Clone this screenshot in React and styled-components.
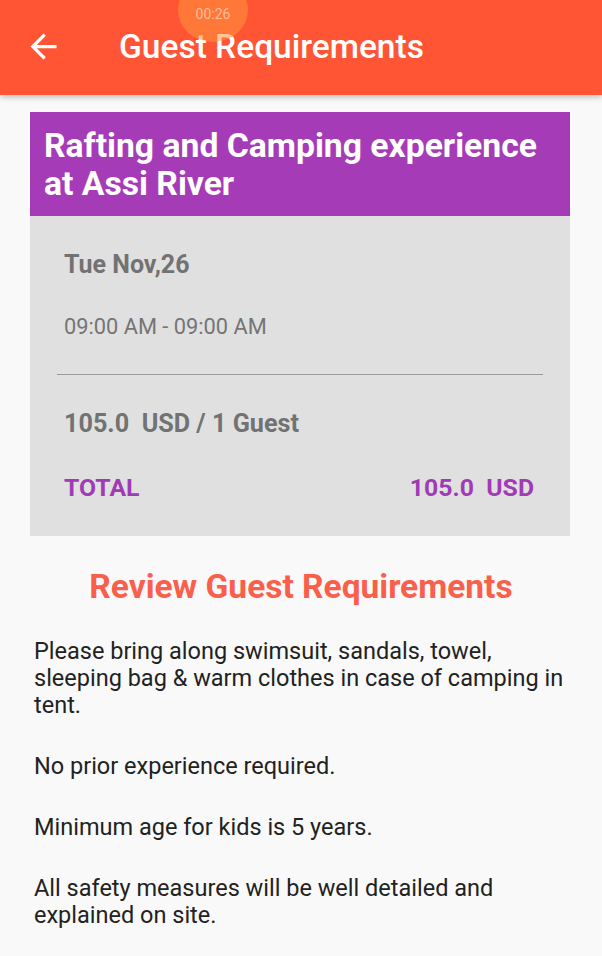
import React from "react";
import styled, { createGlobalStyle } from "styled-components";

const GlobalStyle = createGlobalStyle`
  html, body {
    margin: 0;
    padding: 0;
    background: #f9f9f9;
    font-family: Roboto, "Liberation Sans", sans-serif;
  }
`;

const Page = styled.div`
  width: 602px;
  height: 956px;
  overflow: hidden;
  position: relative;
  background: #f9f9f9;
`;

const AppBar = styled.div`
  height: 95px;
  background: #ff5534;
  display: flex;
  align-items: center;
  padding-left: 24px;
  box-shadow: 0 2px 6px rgba(0, 0, 0, 0.25);
  position: relative;
  z-index: 1;
`;

const BackButton = styled.div`
  width: 39px;
  height: 39px;
  display: flex;
  align-items: center;
  justify-content: center;
  margin-right: 56px;
  margin-top: -2px;
`;

const Title = styled.h1`
  margin: 0;
  margin-top: -2px;
  color: #fff;
  font-size: 33.5px;
  line-height: 40px;
  font-weight: 500;
`;

const RecDot = styled.div`
  position: absolute;
  left: 178px;
  top: -22px;
  width: 70px;
  height: 64px;
  border-radius: 50%;
  background: rgba(255, 150, 60, 0.55);
  color: rgba(255, 220, 200, 0.7);
  font-size: 14px;
  display: flex;
  align-items: flex-end;
  justify-content: center;
  padding-bottom: 20px;
  box-sizing: border-box;
`;

const Card = styled.div`
  margin: 17px 32px 0 30px;
`;

const CardHead = styled.div`
  background: #a63bb8;
  color: #fff;
  font-size: 33.7px;
  font-weight: 700;
  line-height: 38px;
  padding: 15px 14px 13px 14px;
`;

const CardBody = styled.div`
  background: #e0e0e0;
  padding: 34px 36px 33px 34px;
`;

const DateText = styled.div`
  color: #727272;
  font-size: 25px;
  line-height: 30px;
  font-weight: 700;
`;

const TimeText = styled.div`
  color: #757575;
  font-size: 21.8px;
  line-height: 26px;
  margin-top: 34px;
`;

const Divider = styled.div`
  height: 1px;
  background: #9a9a9a;
  margin: 34px -9px 0 -7px;
`;

const PriceText = styled.div`
  color: #727272;
  font-size: 25.2px;
  line-height: 30px;
  font-weight: 700;
  margin-top: 34px;
  white-space: pre;
`;

const TotalRow = styled.div`
  display: flex;
  justify-content: space-between;
  color: #a13ab5;
  font-size: 24.8px;
  line-height: 30px;
  font-weight: 700;
  margin-top: 34px;
  white-space: pre;
`;

const SectionTitle = styled.h2`
  margin: 31px 0 0;
  text-align: center;
  color: #fa5f4c;
  font-size: 33.5px;
  line-height: 40px;
  font-weight: 700;
`;

const Requirements = styled.div`
  padding: 31px 30px 0 34px;
  display: flex;
  flex-direction: column;
  gap: 34px;
`;

const Para = styled.p`
  margin: 0;
  color: #222;
  font-size: 23.5px;
  line-height: 27px;
`;

export default function App() {
  return (
    <Page>
      <GlobalStyle />
      <AppBar>
        <BackButton>
          <svg width="39" height="39" viewBox="0 0 24 24">
            <path
              d="M20 11H7.83l5.59-5.59L12 4l-8 8 8 8 1.41-1.41L7.83 13H20v-2z"
              fill="#fff"
            />
          </svg>
        </BackButton>
        <Title>Guest Requirements</Title>
        <RecDot>00:26</RecDot>
      </AppBar>
      <Card>
        <CardHead>Rafting and Camping experience at Assi River</CardHead>
        <CardBody>
          <DateText>Tue Nov,26</DateText>
          <TimeText>09:00 AM - 09:00 AM</TimeText>
          <Divider />
          <PriceText>105.0  USD / 1 Guest</PriceText>
          <TotalRow>
            <span>TOTAL</span>
            <span>105.0  USD</span>
          </TotalRow>
        </CardBody>
      </Card>
      <SectionTitle>Review Guest Requirements</SectionTitle>
      <Requirements>
        <Para>
          Please bring along swimsuit, sandals, towel, sleeping bag &amp; warm
          clothes in case of camping in tent.
        </Para>
        <Para>No prior experience required.</Para>
        <Para>Minimum age for kids is 5 years.</Para>
        <Para>All safety measures will be well detailed and explained on site.</Para>
      </Requirements>
    </Page>
  );
}
